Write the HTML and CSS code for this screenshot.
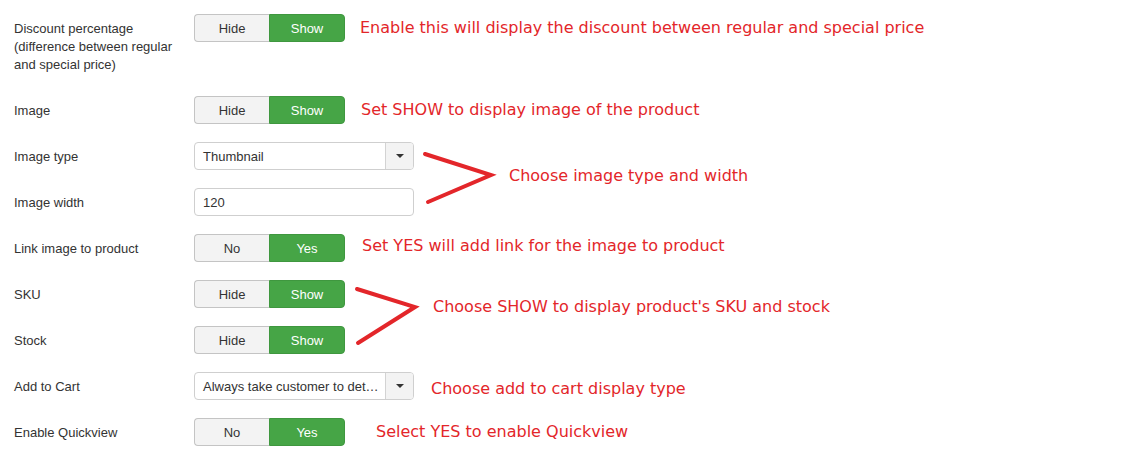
FILE: index.html
```html
<!DOCTYPE html>
<html>
<head>
<meta charset="utf-8">
<link rel="stylesheet" href="styles.css">
</head>
<body>
<div class="form">
  <div class="row">
    <div class="label">Discount percentage (difference between regular and special price)</div>
    <div class="controls">
      <div class="toggle"><span class="btn off">Hide</span><span class="btn on">Show</span></div>
      <span class="note n1">Enable this will display the discount between regular and special price</span>
    </div>
  </div>
  <div class="row">
    <div class="label">Image</div>
    <div class="controls">
      <div class="toggle"><span class="btn off">Hide</span><span class="btn on">Show</span></div>
      <span class="note n2">Set SHOW to display image of the product</span>
    </div>
  </div>
  <div class="row">
    <div class="label">Image type</div>
    <div class="controls">
      <div class="select"><span class="sel-text">Thumbnail</span><span class="sel-btn"><span class="caret"></span></span></div>
    </div>
  </div>
  <div class="row">
    <div class="label">Image width</div>
    <div class="controls">
      <div class="input">120</div>
    </div>
  </div>
  <div class="row">
    <div class="label">Link image to product</div>
    <div class="controls">
      <div class="toggle"><span class="btn off">No</span><span class="btn on">Yes</span></div>
      <span class="note n3">Set YES will add link for the image to product</span>
    </div>
  </div>
  <div class="row">
    <div class="label">SKU</div>
    <div class="controls">
      <div class="toggle"><span class="btn off">Hide</span><span class="btn on">Show</span></div>
    </div>
  </div>
  <div class="row">
    <div class="label">Stock</div>
    <div class="controls">
      <div class="toggle"><span class="btn off">Hide</span><span class="btn on">Show</span></div>
    </div>
  </div>
  <div class="row">
    <div class="label">Add to Cart</div>
    <div class="controls">
      <div class="select"><span class="sel-text">Always take customer to detail page</span><span class="sel-btn"><span class="caret"></span></span></div>
      <span class="note n4">Choose add to cart display type</span>
    </div>
  </div>
  <div class="row">
    <div class="label">Enable Quickview</div>
    <div class="controls">
      <div class="toggle"><span class="btn off">No</span><span class="btn on">Yes</span></div>
      <span class="note n5">Select YES to enable Quickview</span>
    </div>
  </div>

  <svg class="arrows" width="1136" height="463" viewBox="0 0 1136 463">
    <polyline points="425,154 491,175 428,202" fill="none" stroke="#e3262a" stroke-width="4" stroke-linecap="round" stroke-linejoin="miter"/>
    <polyline points="357,289 415,307 358,343" fill="none" stroke="#e3262a" stroke-width="4" stroke-linecap="round" stroke-linejoin="miter"/>
  </svg>
  <span class="note abs a1">Choose image type and width</span>
  <span class="note abs a2">Choose SHOW to display product's SKU and stock</span>
</div>
</body>
</html>
```

FILE: styles.css
```css
html, body {
  margin: 0;
  padding: 0;
  background: #fff;
}
.form {
  position: relative;
  padding: 14px;
  width: 1108px;
  height: 435px;
  font-family: "Liberation Sans", Arial, sans-serif;
  font-size: 13px;
  color: #333;
}
.row {
  display: flex;
  margin-bottom: 18px;
}
.label {
  width: 160px;
  padding: 6px 0 4px;
  line-height: 18px;
  margin-right: 20px;
}
.controls {
  display: flex;
  align-items: center;
  align-self: flex-start;
  height: 28px;
}
.toggle {
  display: flex;
  height: 28px;
}
.btn {
  box-sizing: border-box;
  height: 28px;
  line-height: 27px;
  text-align: center;
  font-size: 13px;
}
.btn.off {
  width: 75px;
  background: #f3f3f3;
  border: 1px solid #c4c4c4;
  border-right: none;
  border-radius: 4px 0 0 4px;
  color: #333;
}
.btn.on {
  width: 76px;
  background: #46a546;
  border: 1px solid #3f973f;
  border-radius: 0 4px 4px 0;
  color: #fff;
}
.select {
  box-sizing: border-box;
  display: flex;
  width: 220px;
  height: 28px;
  border: 1px solid #cfcfcf;
  border-radius: 4px;
  background: #fff;
  overflow: hidden;
}
.sel-text {
  flex: 1;
  min-width: 0;
  padding-left: 8px;
  padding-right: 4px;
  padding-top: 1px;
  line-height: 25px;
  white-space: nowrap;
  overflow: hidden;
  text-overflow: ellipsis;
  color: #333;
}
.sel-btn {
  width: 27px;
  flex: none;
  border-left: 1px solid #d3d3d3;
  background: #f3f3f3;
  display: flex;
  align-items: center;
  justify-content: center;
}
.caret {
  width: 0;
  height: 0;
  border-left: 4px solid transparent;
  border-right: 4px solid transparent;
  border-top: 4px solid #333;
}
.input {
  box-sizing: border-box;
  width: 220px;
  height: 28px;
  border: 1px solid #cfcfcf;
  border-radius: 4px;
  padding-left: 8px;
  padding-top: 1px;
  line-height: 25px;
  color: #333;
}
.note {
  font-family: "DejaVu Sans", sans-serif;
  font-size: 16px;
  line-height: 20px;
  color: #e3262a;
  white-space: nowrap;
}
.n1 { margin-left: 15px; margin-top: 0; }
.n2 { margin-left: 16px; margin-top: 0; }
.n3 { margin-left: 17px; margin-top: -4px; }
.n4 { margin-left: 17px; margin-top: 6px; }
.n5 { margin-left: 31px; margin-top: 0; }
.arrows {
  position: absolute;
  left: 0;
  top: 0;
  pointer-events: none;
}
.abs {
  position: absolute;
}
.a1 { left: 509px; top: 166px; }
.a2 { left: 433px; top: 297px; }
```
